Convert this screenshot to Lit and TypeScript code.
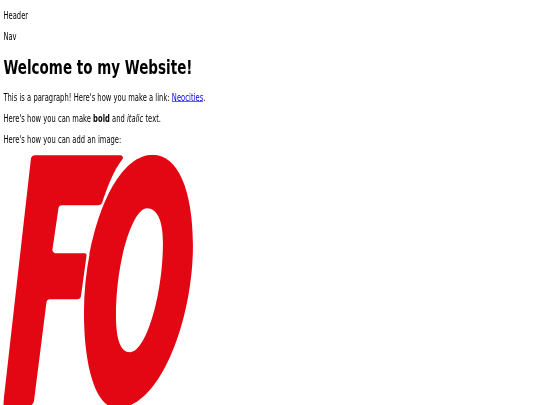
import { LitElement, html, css } from "lit";
import { customElement } from "lit/decorators.js";

@customElement("app-root")
export class AppRoot extends LitElement {
  static styles = css`
    :host { display: block; height: 405px; overflow: hidden; background: #fff; filter: blur(0.35px); }
    .page { width: 1280px; box-sizing: border-box; padding: 16px 8px 0; transform: scale(0.422, 0.6); transform-origin: 0 0; font-family: "DejaVu Sans", sans-serif; font-size: 16px; color: #000; }
    p { margin: 0 0 16px; letter-spacing: 0.06px; }
    h1 { margin: 23.1px 0 21.44px; font-size: 32px; font-weight: 700; }
    a { color: #0000ee; text-decoration: underline; }
    .logo { display: block; width: 462px; height: 425px; }
  `;
  render() {
    return html`
      <div class="page">
        <p>Header</p>
        <p>Nav</p>
        <h1>Welcome to my Website!</h1>
        <p>This is a paragraph! Here's how you make a link: <a href="#">Neocities</a>.</p>
        <p>Here's how you can make <b>bold</b> and <i>italic</i> text.</p>
        <p>Here's how you can add an image:</p>
        <svg class="logo" viewBox="3.400 154.600 195 255" preserveAspectRatio="none" aria-hidden="true">
          <path fill="#e30613" d="M35 155 L121 155 Q124 156 122.500 159 C113 171 107 188 102 203 Q101 205 98 205 L62 205 Q59 205 58.500 208 L52.500 249 Q52 252 55 253 L85 253 Q87 253 86.500 256 L81 296 Q80.500 299 77 299 L50 299 Q47 299 46.500 302 L34 401 Q33 405 29 406 L3 406 L31 158 Q32 155 35 155 Z"/>
          <path fill="#e30613" fill-rule="evenodd" d="M153 154.500 C178 154.500 193 190 193 245 C193 320 160 408 117 408 C97 408 84 370 84 312 C84 240 112 154.500 153 154.500 Z M147 208 C133 208 116 260 116 315 C116 340 121 352 130 352 C146 352 163 295 163 242 C163 220 157 208 147 208 Z"/>
        </svg>
      </div>
    `;
  }
}
